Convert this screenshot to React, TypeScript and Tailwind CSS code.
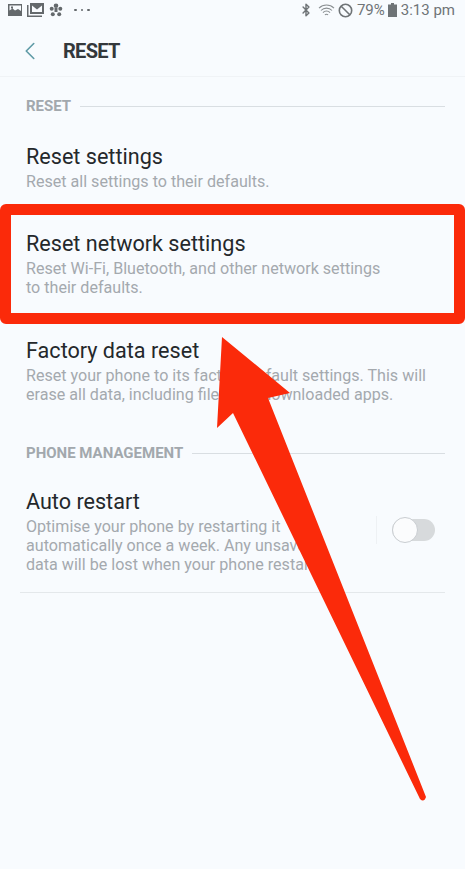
import { Bluetooth, ChevronLeft } from "lucide-react";

function SectionLabel({ label }: { label: string }) {
  return (
    <div className="flex items-center gap-[9px] pl-[26px] pr-[20px]">
      <span className="text-[15px] leading-[18px] font-bold text-[#a2a8ad]">{label}</span>
      <div className="h-px flex-1 bg-[#d9dee2]" />
    </div>
  );
}

function Row({ title, children, className }: { title: string; children: React.ReactNode; className: string }) {
  return (
    <div className={`pl-[26px] ${className}`}>
      <p className="text-[21.6px] leading-[26px] text-[#24282b]">{title}</p>
      <p className="mt-[2px] text-[16.1px] leading-[19px] text-[#a4a9ae]">{children}</p>
    </div>
  );
}

export default function App() {
  return (
    <div className="relative h-[869px] w-[465px] overflow-hidden bg-[#f8fbfe] font-['Roboto',sans-serif]">
      {/* status bar */}
      <div className="flex h-[20px] items-center justify-between pr-[10px] pl-[8px] text-[#6f7477]">
        <div className="flex items-center">
          <svg width="14" height="12" viewBox="0 0 14 12" className="fill-[#64696c]">
            <path d="M0 0h14v12H0zM1.500 1.500v5l3-2 2.500 2 3-1.500 3 2v-5.500zM3 2.500h2v2H3z" fillRule="evenodd" />
          </svg>
          <svg width="17" height="14" viewBox="0 0 17 14" className="ml-[5px] fill-[#64696c]">
            <path d="M3 0h14v11H3zM5 2.500v6.500h10V2.500l-5 4zM0 2h1.500v10.500H15V14H0z" fillRule="evenodd" />
          </svg>
          <svg width="14" height="14" viewBox="0 0 14 14" className="ml-[5px] fill-[#64696c]">
            <circle cx="7" cy="2.800" r="2.300" />
            <circle cx="2.700" cy="5.700" r="2" />
            <circle cx="11.300" cy="5.700" r="2" />
            <circle cx="3.800" cy="11.200" r="2" />
            <circle cx="10.200" cy="11.200" r="2" />
            <rect x="5.500" y="5" width="3" height="4" />
          </svg>
          <div className="ml-[11px] flex gap-[4px]">
            <span className="size-[2.500px] rounded-full bg-[#64696c]" />
            <span className="size-[2.500px] rounded-full bg-[#64696c]" />
            <span className="size-[2.500px] rounded-full bg-[#64696c]" />
          </div>
        </div>
        <div className="flex items-center">
          <Bluetooth size={14} strokeWidth={2.500} />
          <svg width="17" height="13" viewBox="0 0 17 13" fill="none" stroke="#8a8f92" strokeWidth="1.100" className="ml-[5px]">
            <path d="M1 4.200a10.500 10.500 0 0 1 15 0M3 6.500a7.500 7.500 0 0 1 11 0M5 8.700a4.500 4.500 0 0 1 7 0M7 11a1.800 1.800 0 0 1 3 0" />
          </svg>
          <svg width="15" height="15" viewBox="0 0 15 15" fill="none" stroke="#6f7477" strokeWidth="1.600" className="ml-[3px]">
            <circle cx="7.500" cy="7.500" r="6.200" />
            <path d="M3.200 3.200l8.600 8.600" />
          </svg>
          <span className="ml-[4px] text-[15px] leading-[20px]">79%</span>
          <svg width="9" height="14" viewBox="0 0 9 14" className="ml-[3px] fill-[#6f7477]">
            <path d="M3 0h3v1.500h3V14H0V1.500h3z" />
          </svg>
          <span className="ml-[4px] text-[15px] leading-[20px]">3:13 pm</span>
        </div>
      </div>

      {/* title bar */}
      <div className="flex h-[57px] items-center border-b border-[#f0f3f6] pt-[6px]">
        <ChevronLeft size={30} strokeWidth={1.300} className="ml-[15px] text-[#5f9ba6]" />
        <h1 className="ml-[18px] text-[20px] leading-[26px] font-bold tracking-[-0.7px] text-[#34383b]">RESET</h1>
      </div>

      {/* list */}
      <div className="pt-[20px]">
        <SectionLabel label="RESET" />
        <Row title="Reset settings" className="mt-[29px]">
          Reset all settings to their defaults.
        </Row>
        <Row title="Reset network settings" className="mt-[40px]">
          Reset Wi-Fi, Bluetooth, and other network settings
          <br />
          to their defaults.
        </Row>
        <Row title="Factory data reset" className="mt-[41px]">
          Reset your phone to its factory default settings. This will
          <br />
          erase all data, including files and downloaded apps.
        </Row>
        <div className="mt-[40px]">
          <SectionLabel label="PHONE MANAGEMENT" />
        </div>
        <div className="mt-[27px] flex items-center">
          <Row title="Auto restart" className="flex-1">
            Optimise your phone by restarting it
            <br />
            automatically once a week. Any unsaved
            <br />
            data will be lost when your phone restarts.
          </Row>
          <div className="-mt-[4px] h-[28px] w-px bg-[#eef1f4]" />
          <div className="-mt-[4px] mr-[30px] ml-[15px] flex h-[22px] w-[43px] items-center rounded-full bg-[#d7dadc]">
            <span className="size-[26px] shrink-0 rounded-full border border-[#c9cdd1] bg-[#fbfcfd]" />
          </div>
        </div>
        <div className="mx-[20px] mt-[18px] h-px bg-[#e4e8eb]" />
      </div>

      {/* annotation over the screenshot */}
      <div className="absolute top-[204px] left-0 h-[120px] w-[465px] rounded-[6px] border-[11px] border-[#fb2a0a]" />
      <svg width="465" height="869" viewBox="0 0 465 869" className="absolute top-0 left-0">
        <path
          d="M222 337 L290 393 L268 398 L426 797 Q424 803 420 799 L233 413 L217 428 Z"
          fill="#fb2a0a"
        />
      </svg>
    </div>
  );
}
